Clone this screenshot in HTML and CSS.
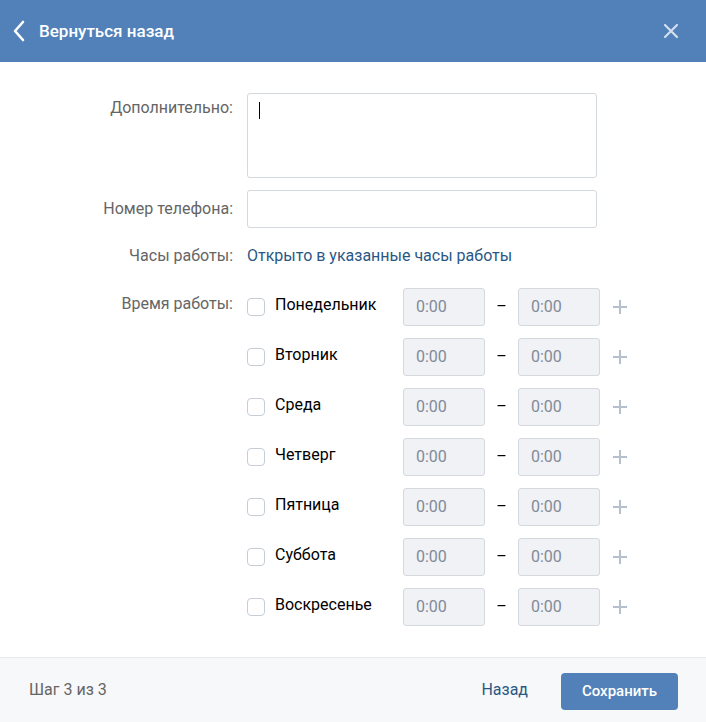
FILE: index.html
```html
<!DOCTYPE html>
<html lang="ru">
<head>
<meta charset="utf-8">
<title>Вернуться назад</title>
<link rel="stylesheet" href="styles.css">
</head>
<body>
<div class="modal">
  <header class="head">
    <div class="back">
      <svg class="chev" width="14" height="22" viewBox="0 0 14 22"><path d="M11 2 L3 11 L11 20" fill="none" stroke="#fff" stroke-width="2.6" stroke-linecap="round" stroke-linejoin="round"/></svg>
      <span class="title">Вернуться назад</span>
    </div>
    <svg class="close" width="16" height="16" viewBox="0 0 16 16"><path d="M2 2 L14 14 M14 2 L2 14" stroke="#fff" stroke-opacity="0.75" stroke-width="2.2" stroke-linecap="round"/></svg>
  </header>

  <main class="form">
    <div class="row">
      <div class="label label-top">Дополнительно:</div>
      <div class="field textarea"><span class="caret"></span></div>
    </div>
    <div class="row">
      <div class="label">Номер телефона:</div>
      <div class="field input"></div>
    </div>
    <div class="row row-hours">
      <div class="label">Часы работы:</div>
      <div class="link">Открыто в указанные часы работы</div>
    </div>
    <div class="row row-days">
      <div class="label label-day">Время работы:</div>
      <div class="days">
        <div class="day"><span class="check"></span><span class="dname">Понедельник</span><span class="time">0:00</span><span class="dash">–</span><span class="time">0:00</span><svg class="plus" width="16" height="16" viewBox="0 0 16 16"><path d="M8 1 V15 M1 8 H15" stroke="#b6c0cc" stroke-width="2"/></svg></div>
        <div class="day"><span class="check"></span><span class="dname">Вторник</span><span class="time">0:00</span><span class="dash">–</span><span class="time">0:00</span><svg class="plus" width="16" height="16" viewBox="0 0 16 16"><path d="M8 1 V15 M1 8 H15" stroke="#b6c0cc" stroke-width="2"/></svg></div>
        <div class="day"><span class="check"></span><span class="dname">Среда</span><span class="time">0:00</span><span class="dash">–</span><span class="time">0:00</span><svg class="plus" width="16" height="16" viewBox="0 0 16 16"><path d="M8 1 V15 M1 8 H15" stroke="#b6c0cc" stroke-width="2"/></svg></div>
        <div class="day"><span class="check"></span><span class="dname">Четверг</span><span class="time">0:00</span><span class="dash">–</span><span class="time">0:00</span><svg class="plus" width="16" height="16" viewBox="0 0 16 16"><path d="M8 1 V15 M1 8 H15" stroke="#b6c0cc" stroke-width="2"/></svg></div>
        <div class="day"><span class="check"></span><span class="dname">Пятница</span><span class="time">0:00</span><span class="dash">–</span><span class="time">0:00</span><svg class="plus" width="16" height="16" viewBox="0 0 16 16"><path d="M8 1 V15 M1 8 H15" stroke="#b6c0cc" stroke-width="2"/></svg></div>
        <div class="day"><span class="check"></span><span class="dname">Суббота</span><span class="time">0:00</span><span class="dash">–</span><span class="time">0:00</span><svg class="plus" width="16" height="16" viewBox="0 0 16 16"><path d="M8 1 V15 M1 8 H15" stroke="#b6c0cc" stroke-width="2"/></svg></div>
        <div class="day"><span class="check"></span><span class="dname">Воскресенье</span><span class="time">0:00</span><span class="dash">–</span><span class="time">0:00</span><svg class="plus" width="16" height="16" viewBox="0 0 16 16"><path d="M8 1 V15 M1 8 H15" stroke="#b6c0cc" stroke-width="2"/></svg></div>
      </div>
    </div>
  </main>

  <footer class="foot">
    <span class="step">Шаг 3 из 3</span>
    <div class="actions">
      <span class="btn-link">Назад</span>
      <span class="btn">Сохранить</span>
    </div>
  </footer>
</div>
</body>
</html>
```
FILE: styles.css
```css
* { box-sizing: border-box; }
html, body { margin: 0; padding: 0; background: #fff; }
body { font-family: Roboto, Arial, sans-serif; font-size: 16px; line-height: 20px; color: #000; }
.modal { width: 706px; height: 722px; display: flex; flex-direction: column; }

.head { height: 62px; background: #5181b8; display: flex; align-items: center; justify-content: space-between; padding: 0 27px 0 12px; flex-shrink: 0; }
.back { display: flex; align-items: center; gap: 13px; }
.chev { display: block; }
.title { color: #fff; font-size: 17px; font-weight: 500; }
.close { display: block; }

.form { flex: 1; padding-top: 31px; display: flex; flex-direction: column; gap: 12px; }
.row { display: grid; grid-template-columns: 233px auto; column-gap: 14px; align-items: center; }
.label { text-align: right; color: #656565; }
.label-top { align-self: start; padding-top: 5px; }
.field { border: 1px solid #d3d9de; border-radius: 3px; background: #fff; width: 350px; }
.textarea { height: 85px; padding: 8px 11px; }
.caret { display: block; width: 1px; height: 17px; background: #000; }
.input { height: 38px; }
.row-hours { height: 32px; margin-bottom: 4px; }
.link { color: #2a5885; }
.row-days { align-items: start; }
.label-day { padding-top: 6px; }
.days { display: flex; flex-direction: column; gap: 12px; }
.day { display: flex; align-items: center; height: 38px; }
.check { width: 18px; height: 18px; border: 1px solid #c5cdd7; border-radius: 4px; background: #fff; flex-shrink: 0; margin-right: 10px; }
.dname { width: 128px; flex-shrink: 0; color: #000; margin-top: -5px; }
.time { width: 82px; height: 38px; border: 1px solid #d3d9de; border-radius: 3px; background: #f0f2f5; color: #828a99; padding-left: 12px; display: flex; align-items: center; flex-shrink: 0; }
.dash { width: 33px; flex-shrink: 0; text-align: center; color: #000; }
.plus { margin-left: 12px; display: block; flex-shrink: 0; }

.foot { height: 65px; border-top: 1px solid #e7e8ec; background: #f7f8fa; display: flex; align-items: center; justify-content: space-between; padding: 0 28px 0 29px; flex-shrink: 0; }
.step { color: #656565; }
.actions { display: flex; align-items: center; gap: 33px; }
.btn-link { color: #2a5885; }
.btn { background: #5181b8; color: #fff; border-radius: 4px; height: 37px; width: 117px; display: flex; align-items: center; justify-content: center; font-size: 15px; font-weight: 500; margin-top: 2px; }
```
